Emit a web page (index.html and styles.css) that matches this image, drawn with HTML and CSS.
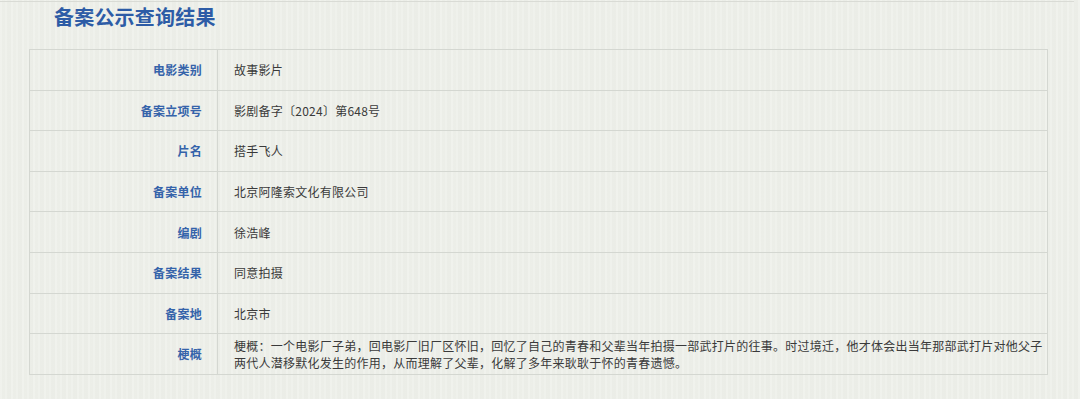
FILE: index.html
```html
<!DOCTYPE html>
<html lang="zh-CN">
<head>
<meta charset="utf-8">
<title>备案公示查询结果</title>
<link rel="stylesheet" href="styles.css">
</head>
<body>
<div class="topline"></div>
<h1 class="title">备案公示查询结果</h1>
<table class="result">
  <tr><th>电影类别</th><td>故事影片</td></tr>
  <tr><th>备案立项号</th><td>影剧备字〔2024〕第648号</td></tr>
  <tr><th>片名</th><td>搭手飞人</td></tr>
  <tr><th>备案单位</th><td>北京阿隆索文化有限公司</td></tr>
  <tr><th>编剧</th><td>徐浩峰</td></tr>
  <tr><th>备案结果</th><td>同意拍摄</td></tr>
  <tr><th>备案地</th><td>北京市</td></tr>
  <tr class="tall"><th>梗概</th><td class="synopsis">梗概：一个电影厂子弟，回电影厂旧厂区怀旧，回忆了自己的青春和父辈当年拍摄一部武打片的往事。时过境迁，他才体会出当年那部武打片对他父子<br>两代人潜移默化发生的作用，从而理解了父辈，化解了多年来耿耿于怀的青春遗憾。</td></tr>
</table>
</body>
</html>
```
FILE: styles.css
```css
html, body {
  margin: 0;
  padding: 0;
}
body {
  width: 1080px;
  height: 399px;
  overflow: hidden;
  background-color: #eef0ea;
  background-image: repeating-linear-gradient(90deg, rgba(255,255,255,0.12) 0 2px, rgba(0,0,0,0.006) 2px 5px, rgba(255,255,255,0.08) 5px 7px, rgba(0,0,0,0.01) 7px 11px);
  font-family: "Noto Sans CJK SC", "Noto Sans", sans-serif;
}
.topline {
  height: 1px;
  width: 1074px;
  margin-top: 1px;
  background: #d9dbd5;
}
.title {
  margin: 0;
  padding-left: 54px;
  height: 34px;
  line-height: 30px;
  font-size: 20px;
  font-weight: bold;
  color: #2d5ca6;
  letter-spacing: 0.2px;
}
.result {
  margin-left: 29px;
  margin-top: 13px;
  width: 1019px;
  border-collapse: collapse;
  table-layout: fixed;
  font-size: 12px;
}
.result th,
.result td {
  border: 1px solid #d4d7d1;
  height: 39.6px;
  padding: 0;
  line-height: 17px;
}
.result th {
  width: 172px;
  padding-right: 15px;
  text-align: right;
  font-weight: bold;
  color: #3563aa;
  letter-spacing: 0.25px;
}
.result td {
  padding-left: 16px;
  padding-right: 2px;
  text-align: left;
  color: #3a3a3a;
  letter-spacing: 0.25px;
}
.result td.synopsis {
  white-space: nowrap;
}
```
